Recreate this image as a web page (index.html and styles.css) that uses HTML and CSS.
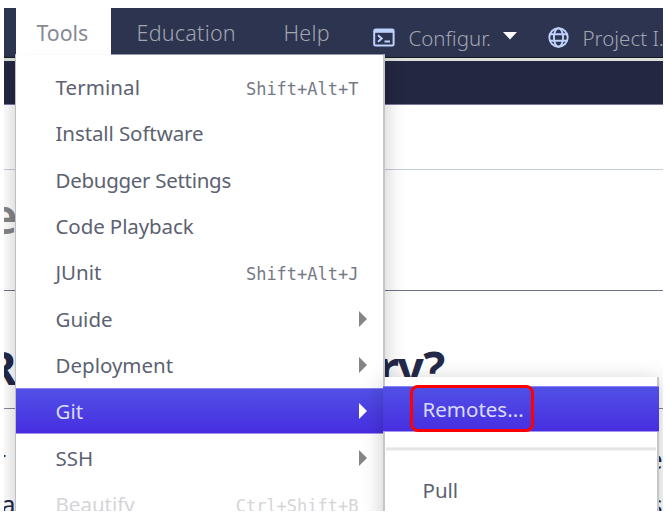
FILE: index.html
```html
<!DOCTYPE html>
<html lang="en">
<head>
<meta charset="utf-8">
<title>Tools menu</title>
<link rel="stylesheet" href="styles.css">
</head>
<body>
<div class="app">
  <header class="menubar">
    <div class="tab active">Tools</div>
    <div class="tab education">Education</div>
    <div class="tab help">Help</div>
    <div class="tool config">
      <svg class="icon" width="22" height="19" viewBox="0 0 22 19"><rect x="1.2" y="1.5" width="19.4" height="16" rx="1.5" fill="none" stroke="#bfd0fb" stroke-width="2"/><path d="M1 3h20" stroke="#bfd0fb" stroke-width="3.6"/><path d="M5 7.2l3.7 3.2L5 13.8M11.5 13.4h5.5" fill="none" stroke="#bfd0fb" stroke-width="2"/></svg>
      <span>Configur.</span>
      <svg class="caret" width="14" height="8" viewBox="0 0 14 8"><path d="M0 0h14L7 7.5z" fill="#fff"/></svg>
    </div>
    <div class="tool project">
      <svg class="icon" width="21" height="21" viewBox="0 0 21 21" fill="none" stroke="#bfd0fb" stroke-width="1.9"><circle cx="10.5" cy="10.5" r="9.2"/><ellipse cx="10.5" cy="10.5" rx="4.6" ry="9.2"/><path d="M1.5 7.3h18M1.5 13.7h18"/></svg>
      <span>Project I.</span>
    </div>
  </header>
  <div class="subbar"></div>
  <main class="page">
    <div class="band first"></div>
    <div class="band second"><span class="title">e</span></div>
    <div class="band third"><span class="head-left">R</span><span class="head-right">ry?</span></div>
    <div class="copy"><span class="left-r">r</span><span>e</span></div>
    <div class="copy last"><span class="left-a">a</span><span>s</span></div>
  </main>
  <nav class="menu">
    <div class="item"><span class="loose">Terminal</span><kbd>Shift+Alt+T</kbd></div>
    <div class="item"><span class="snug">Install Software</span></div>
    <div class="item"><span class="tight">Debugger Settings</span></div>
    <div class="item"><span class="snug">Code Playback</span></div>
    <div class="item"><span>JUnit</span><kbd>Shift+Alt+J</kbd></div>
    <div class="item"><span>Guide</span><i class="arrow"></i></div>
    <div class="item"><span>Deployment</span><i class="arrow"></i></div>
    <div class="item selected"><span>Git</span><i class="arrow"></i></div>
    <div class="item"><span>SSH</span><i class="arrow"></i></div>
    <div class="item disabled"><span>Beautify</span><kbd>Ctrl+Shift+B</kbd></div>
  </nav>
  <nav class="submenu">
    <div class="item selected"><span>Remotes...</span></div>
    <div class="separator"></div>
    <div class="item"><span>Pull</span></div>
  </nav>
  <div class="highlight"></div>
</div>
</body>
</html>
```
FILE: styles.css
```css
* { box-sizing: border-box; }
body { margin: 0; background: #fff; font-family: "Noto Sans", "Open Sans", sans-serif; }
.app { position: relative; width: 659px; height: 503px; margin: 8px 0 0 3.5px; overflow: hidden; color: #5c6271; font-size: 20.5px; white-space: nowrap; }
.menubar { height: 50px; display: flex; background: #2d3450; color: #a1a5b0; border-bottom: 1px solid #15191e; font-weight: 300; }
.tab, .tool { flex-shrink: 0; }
.tab { height: 50px; line-height: 49px; font-size: 21.5px; }
.tab.active { width: 95px; margin-left: 12px; padding-left: 21px; background: #fff; color: #858994; font-weight: 400; font-size: 21.3px; }
.education { width: 146px; padding-left: 26px; letter-spacing: .25px; }
.help { width: 116px; padding-left: 27px; letter-spacing: .25px; }
.tool { display: flex; align-items: center; padding-top: 10px; line-height: 40px; }
.config { width: 175px; }
.config .icon { margin: -1px 14px 0 0; }
.caret { margin: -4px 0 0 12px; }
.project .icon { margin-right: 14px; margin-top: -1px; }
.subbar { height: 47px; background: #242741; border-top: 3px solid #dbe0db; border-bottom: 1px solid #7979a5; }
.page { color: #24294a; }
.band { overflow: hidden; }
.first { height: 65px; border-bottom: 1px solid #c6ccda; }
.second { height: 121px; border-bottom: 1px solid #6d7389; color: #858585; }
.third { height: 118px; border-bottom: 1px solid #858a98; display: flex; font-size: 46px; font-weight: 700; line-height: 58px; padding-top: 47px; }
.title { display: block; font-size: 48px; font-weight: 600; line-height: 68px; padding-top: 12px; margin-left: -14px; }
.head-left { width: 392px; margin-left: -17px; }
.head-right { letter-spacing: -1.5px; }
.copy { display: flex; height: 46px; line-height: 46px; font-size: 25px; padding-top: 27px; }
.copy.last { padding-top: 26px; }
.left-r { width: 663px; margin-left: -8px; }
.left-a { width: 657px; margin-left: -2px; }
.menu { position: absolute; left: 11px; top: 46px; width: 370px; height: 470px; padding-top: 10px; background: #fff; border-left: 1px solid #bfbfbf; border-right: 2px solid #c6c6c6; box-shadow: 0 4px 20px rgba(0,0,0,.22); clip-path: inset(0.5px -22px 0 -22px); }
.item { height: 46.3px; padding: 0 24px 0 40px; display: flex; align-items: center; justify-content: space-between; }
.item > span { line-height: 46px; }
.loose { letter-spacing: .08px; }
.snug { letter-spacing: -.1px; }
.tight { letter-spacing: -.29px; }
kbd { font: 17px/46px "DejaVu Sans Mono", monospace; color: #747985; padding-top: 4px; }
.arrow { width: 0; height: 0; border-left: 8px solid #858585; border-top: 8px solid transparent; border-bottom: 8px solid transparent; margin-right: -8px; }
.selected { color: #d9dcff; background: linear-gradient(#5150e6, #472ee0); border-top: 1px solid #8782ed; border-bottom: 1px solid #a394f2; }
.selected .arrow { border-left-color: #fff; }
.disabled, .disabled kbd { color: #d4d5d8; }
.submenu { position: absolute; left: 379px; top: 369px; width: 276px; height: 160px; padding-top: 8.5px; background: #fff; border-left: 2px solid #c6c6c6; border-right: 2px solid #c6c6c6; box-shadow: 0 4px 20px rgba(0,0,0,.22); }
.submenu .item { padding-left: 38px; }
.submenu .selected { margin: 0 -2px 0 -2px; padding-left: 40px; }
.separator { height: 4px; margin: 15px 1px 16px; background: #e5e5e5; border-top: 1px solid #efefef; border-bottom: 1px solid #f3f3f3; }
.highlight { position: absolute; left: 406.5px; top: 377px; width: 124px; height: 47px; border: 3px solid #f00; border-radius: 8px; }
```
